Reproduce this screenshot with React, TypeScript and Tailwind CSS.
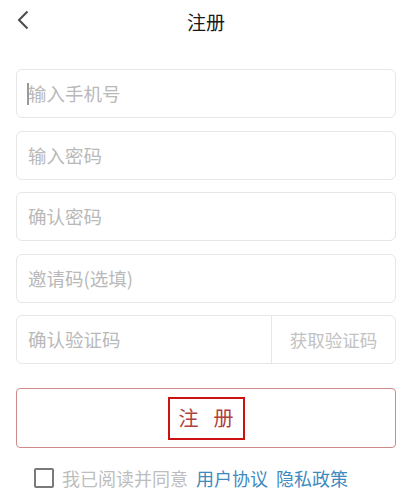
import React from "react";

const font = { fontFamily: '"Noto Sans CJK SC", "Noto Sans", sans-serif' };

function Field({ text, caret }: { text: string; caret?: boolean }) {
  return (
    <div className="relative flex h-[49px] items-center rounded-[6px] border border-[#e6e6e6] bg-white pl-[11px]">
      {caret && <span className="absolute left-[10px] top-[13px] h-[22px] w-[1.5px] bg-[#9a9a9a]" />}
      <span className="text-[18.5px] leading-none text-[#b9b9b9]">{text}</span>
    </div>
  );
}

export default function App() {
  return (
    <div className="min-h-[499px] w-[412px] bg-white" style={font}>
      <div className="relative flex h-[42px] items-center justify-center">
        <svg
          className="absolute left-[16px] top-[10px]"
          width="14"
          height="20"
          viewBox="0 0 14 20"
          fill="none"
        >
          <path d="M11.5 1.5 L3 10 L11.5 18.5" stroke="#4a4a4a" strokeWidth="2" />
        </svg>
        <span className="text-[19px] font-normal leading-none text-[#1a1a1a]">注册</span>
      </div>

      <div className="mx-4 mt-[27px] flex flex-col gap-[12.5px]">
        <Field text="输入手机号" caret />
        <Field text="输入密码" />
        <Field text="确认密码" />
        <Field text="邀请码(选填)" />
        <div className="flex h-[49px] items-center rounded-[6px] border border-[#e6e6e6] bg-white">
          <span className="flex-1 pl-[11px] text-[18.5px] leading-none text-[#b9b9b9]">确认验证码</span>
          <div className="flex h-full w-[124px] items-center justify-center border-l border-[#e6e6e6]">
            <span className="text-[17.5px] leading-none text-[#c2c2c2]">获取验证码</span>
          </div>
        </div>
      </div>

      <div className="mx-4 mt-[24px] flex h-[60px] items-center justify-center rounded-[4px] border border-[#cf8a8a]">
        <div className="flex h-[43px] w-[77px] items-center justify-center gap-[15px] border-2 border-[#cc1111]">
          <span className="text-[20px] leading-none text-[#b04040]">注</span>
          <span className="text-[20px] leading-none text-[#b04040]">册</span>
        </div>
      </div>

      <div className="mt-[20px] flex items-center pl-[34px]">
        <div className="h-[20px] w-[20px] rounded-[2px] border-2 border-[#7a7a7a]" />
        <span className="ml-[8px] text-[18px] leading-none text-[#bdbdbd]">我已阅读并同意</span>
        <span className="ml-[8px] text-[18px] leading-none text-[#3f8bc0]">用户协议</span>
        <span className="ml-[8px] text-[18px] leading-none text-[#3f8bc0]">隐私政策</span>
      </div>
    </div>
  );
}
